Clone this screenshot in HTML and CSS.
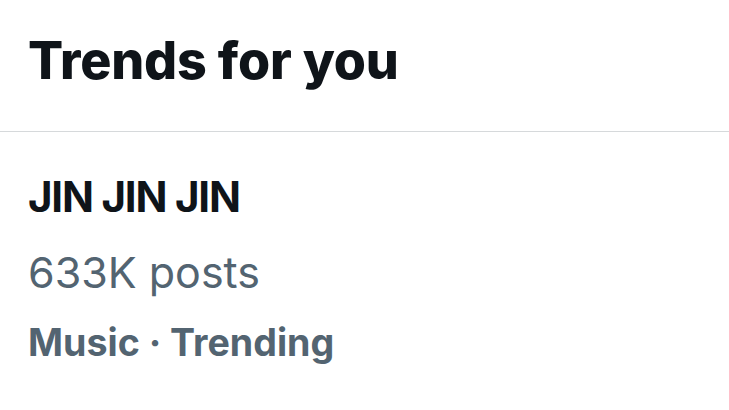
FILE: index.html
```html
<!DOCTYPE html>
<html lang="en">

<head>
    <meta charset="UTF-8">
    <meta name="viewport" content="width=device-width, initial-scale=1.0">
    <title>Trends for you</title>

    <link rel="stylesheet" href="styles.css">
</head>

<body>
    <section class="trends">
        <header class="trends-header">
            <h2 class="trends-title">Trends for you</h2>
        </header>

        <div class="trend">
            <div class="trend-name">JIN JIN JIN</div>
            <div class="trend-count">633K posts</div>
            <div class="trend-meta">Music · Trending</div>
        </div>
    </section>
</body>

</html>
```

FILE: styles.css
```css
body {
    margin: 0;
    background: #fff;
    font-family: Inter, "Liberation Sans", sans-serif;
    color: #0f1419;
}

.trends-header {
    padding: 31px 28px 40px;
    border-bottom: 1px solid #d6d9db;
}

.trends-title {
    margin: 0;
    font-size: 52px;
    line-height: 60px;
    font-weight: 800;
    letter-spacing: -0.2px;
}

.trend {
    padding: 40px 28px 0;
    display: flex;
    flex-direction: column;
}

.trend-name {
    font-size: 42px;
    line-height: 50px;
    font-weight: 700;
    letter-spacing: -1.2px;
}

.trend-count {
    margin-top: 25px;
    font-size: 43px;
    line-height: 50px;
    color: #536471;
}

.trend-meta {
    margin-top: 24px;
    font-size: 37.6px;
    line-height: 44px;
    font-weight: 700;
    color: #536471;
}
```
